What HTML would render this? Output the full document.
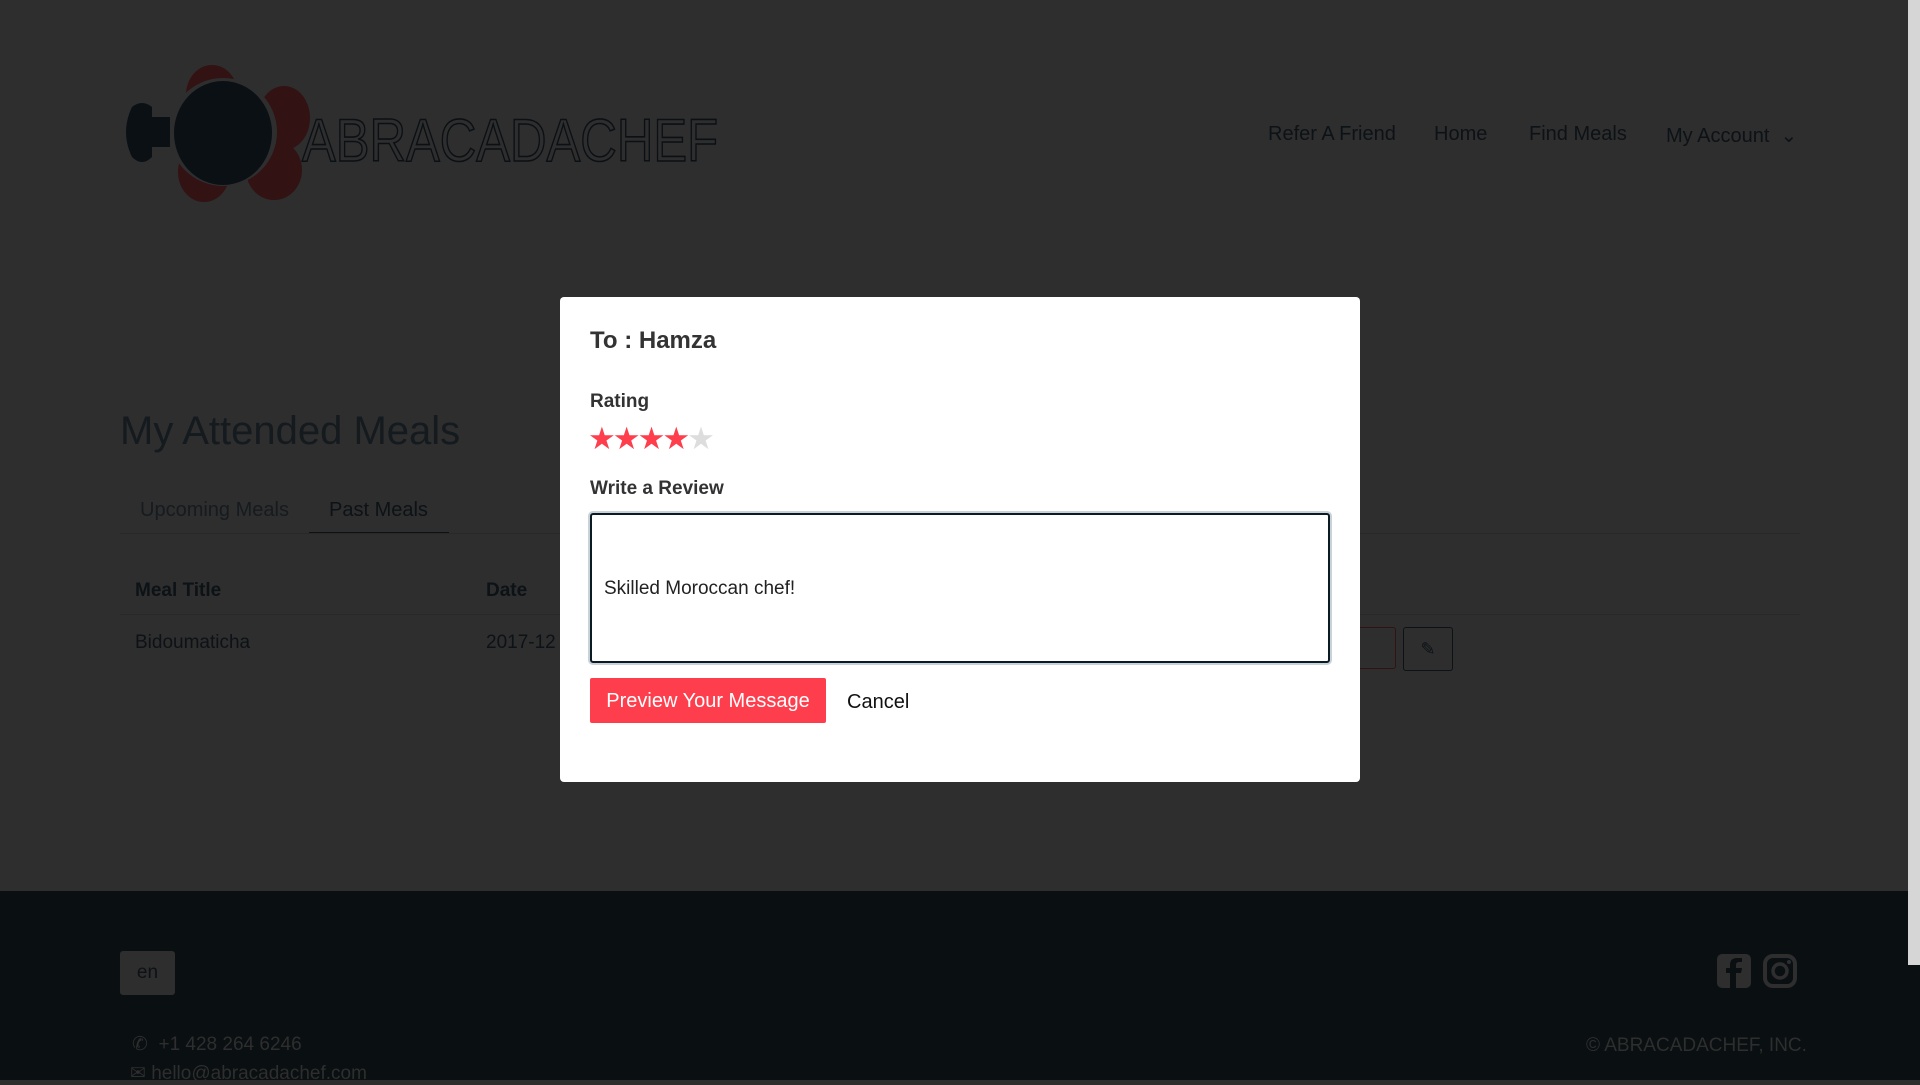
<!DOCTYPE html>
<html><head><meta charset="utf-8"><style>
body{margin:0;width:1920px;height:1080px;overflow:hidden;background:#2e2e2e;font-family:"Liberation Sans",sans-serif;position:relative}
.a{position:absolute;white-space:nowrap}
.d{color:#0c1216}
</style></head><body>
<!-- logo -->
<svg class="a" style="left:124px;top:60px" width="620" height="150" viewBox="0 0 620 150">
<ellipse cx="88" cy="35" rx="26" ry="30" fill="#321212"/>
<ellipse cx="160" cy="58" rx="26" ry="32" fill="#321212"/>
<ellipse cx="80" cy="112" rx="26" ry="30" fill="#321212"/>
<ellipse cx="150" cy="110" rx="28" ry="30" fill="#321212"/>
<circle cx="99" cy="72" r="54" fill="#2e2e2e"/>
<ellipse cx="99" cy="73" rx="49" ry="52" fill="#0b1014"/>
<path d="M8 47 q10-8 20 0 l0 10 l18 0 l0 30 l-18 0 l0 10 q-10 10-20 0 q-12-25 0-50z" fill="#0b1014"/>
<text x="178" y="101" font-size="60" fill="none" stroke="#0b1014" stroke-width="1.6" font-family="Liberation Sans" textLength="416" lengthAdjust="spacingAndGlyphs">ABRACADACHEF</text>
</svg>
<div class="a d" style="left:1268px;top:123px;font-size:20px">Refer A Friend</div>
<div class="a d" style="left:1434px;top:123px;font-size:20px">Home</div>
<div class="a d" style="left:1529px;top:123px;font-size:20px">Find Meals</div>
<div class="a d" style="left:1666px;top:123px;font-size:20px">My Account &nbsp;⌄</div>
<div class="a d" style="left:120px;top:409px;font-size:40px;color:#141a1e">My Attended Meals</div>
<div class="a d" style="left:140px;top:499px;font-size:20px;color:#151b1f">Upcoming Meals</div>
<div class="a d" style="left:329px;top:499px;font-size:20px">Past Meals</div>
<div class="a" style="left:309px;top:532px;width:140px;height:2px;background:#0c1216"></div>
<div class="a" style="left:120px;top:533px;width:1680px;height:1px;background:#282828"></div>
<div class="a d" style="left:135px;top:580px;font-size:19px;font-weight:bold">Meal Title</div>
<div class="a d" style="left:486px;top:580px;font-size:19px;font-weight:bold">Date</div>
<div class="a" style="left:120px;top:614px;width:1680px;height:1px;background:#282828"></div>
<div class="a d" style="left:135px;top:632px;font-size:19px">Bidoumaticha</div>
<div class="a d" style="left:486px;top:632px;font-size:19px">2017-12</div>
<div class="a" style="left:1340px;top:627px;width:56px;height:42px;border:1px solid #321212;border-radius:3px;box-sizing:border-box"></div>
<div class="a" style="left:1403px;top:627px;width:50px;height:44px;border:1px solid #0c1216;border-radius:3px;box-sizing:border-box;color:#0c1216;text-align:center;line-height:42px;font-size:18px">✎</div>
<!-- footer -->
<div class="a" style="left:0;top:891px;width:1920px;height:189px;background:#0a0f12"></div>
<div class="a" style="left:1908px;top:0;width:12px;height:965px;background:#d6d6d6"></div>
<div class="a" style="left:120px;top:951px;width:55px;height:44px;background:#2e2e2e;border-radius:3px;text-align:center;line-height:44px;font-size:19px;color:#0c1216">en</div>
<svg class="a" style="left:1717px;top:953px" width="82" height="36" viewBox="0 0 82 36">
<rect x="0" y="1" width="34" height="34" rx="5" fill="#2e2e2e"/>
<path d="M19 35 V20 h5 l1-5 h-6 v-3 q0-3 3-3 h3 V5 h-5 q-7 0-7 7 v3 h-4 v5 h4 v15z" fill="#0a0f12"/>
<rect x="48" y="3" width="30" height="30" rx="8" fill="none" stroke="#2e2e2e" stroke-width="4"/>
<circle cx="63" cy="18" r="7" fill="none" stroke="#2e2e2e" stroke-width="3.5"/>
<circle cx="72" cy="9" r="2" fill="#2e2e2e"/>
</svg>
<div class="a" style="left:132px;top:1033px;font-size:19px;color:#2e2e2e">✆ &nbsp;+1 428 264 6246</div>
<div class="a" style="left:130px;top:1062px;font-size:19px;color:#2e2e2e">✉ hello@abracadachef.com</div>
<div class="a" style="left:1586px;top:1035px;font-size:19px;color:#2e2e2e">© ABRACADACHEF, INC.</div>
<!-- modal -->
<div class="a" style="left:560px;top:297px;width:800px;height:485px;background:#fff;border-radius:4px"></div>
<div class="a" style="left:590px;top:327px;font-size:24px;font-weight:bold;color:#333">To : Hamza</div>
<div class="a" style="left:590px;top:391px;font-size:19px;font-weight:bold;color:#333">Rating</div>
<div class="a" style="left:588px;top:421px;font-size:31px;letter-spacing:-3px;color:#ff3e4d">★★★★<span style="color:#ddd">★</span></div>
<div class="a" style="left:590px;top:478px;font-size:19px;font-weight:bold;color:#333">Write a Review</div>
<div class="a" style="left:590px;top:513px;width:740px;height:150px;border:2px solid #0c1a24;box-shadow:0 0 0 2px #c8d2d8;border-radius:3px;box-sizing:border-box"></div>
<div class="a" style="left:604px;top:578px;font-size:19px;color:#222">Skilled Moroccan chef!</div>
<div class="a" style="left:590px;top:678px;width:236px;height:45px;background:#ff3e4d;border-radius:2px;color:#fff;font-size:20px;text-align:center;line-height:47px">Preview Your Message</div>
<div class="a" style="left:847px;top:691px;font-size:20px;color:#111">Cancel</div>
</body></html>
